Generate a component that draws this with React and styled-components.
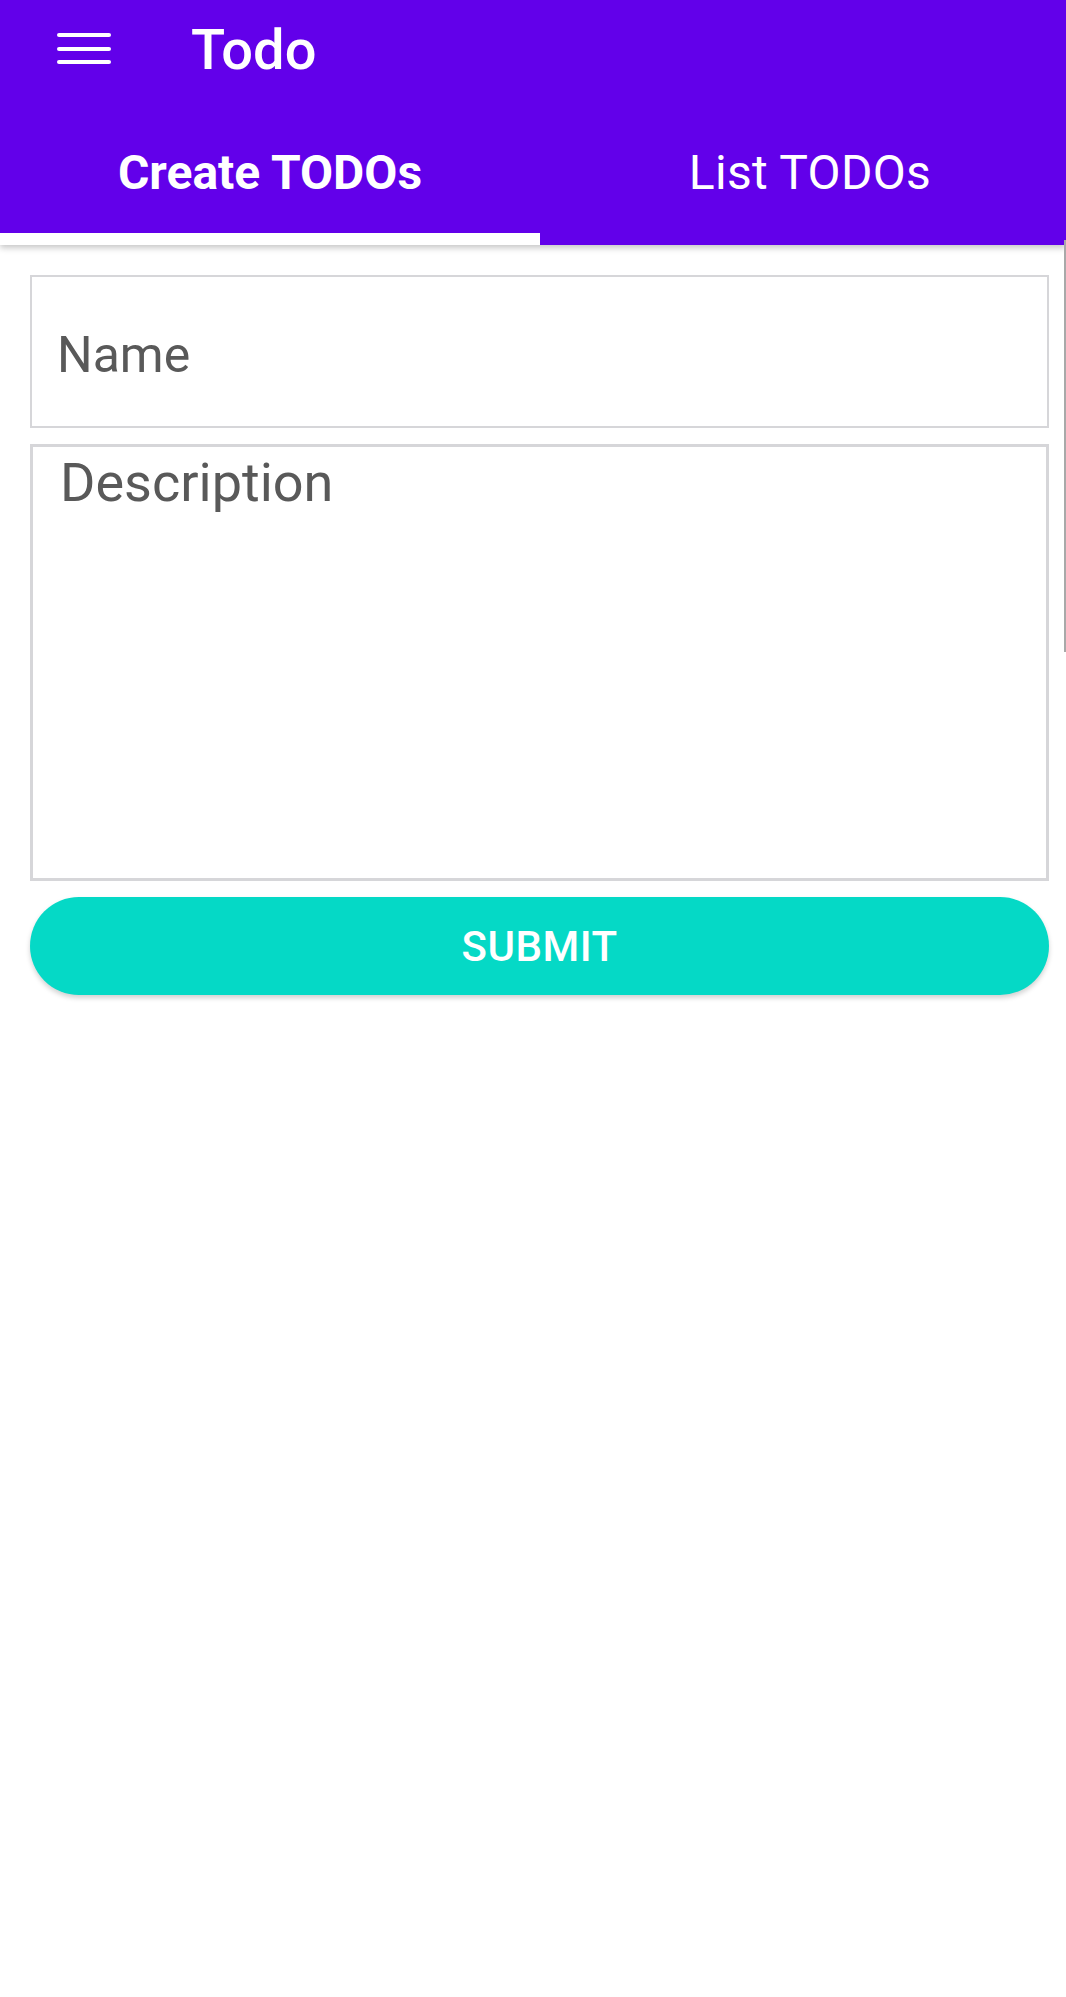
import React from "react";
import styled, { createGlobalStyle } from "styled-components";

const Global = createGlobalStyle`
  html, body { margin: 0; padding: 0; background: #ffffff; }
  body { font-family: Roboto, "Noto Sans", "Liberation Sans", sans-serif; overflow: hidden; }
  * { box-sizing: border-box; }
`;

const Screen = styled.div`
  position: relative;
  width: 1066px;
  min-height: 1997px;
  background: #ffffff;
  overflow: hidden;
`;

const Header = styled.header`
  background: #6200ea;
  box-shadow: 0 3px 6px rgba(0, 0, 0, 0.22);
  position: relative;
  z-index: 1;
`;

const Toolbar = styled.div`
  height: 98px;
  display: flex;
  align-items: center;
  padding-left: 57px;
  gap: 80px;
`;

const MenuButton = styled.div`
  width: 54px;
  display: flex;
  flex-direction: column;
  gap: 9.6px;
  margin-top: -1px;
`;

const MenuLine = styled.span`
  display: block;
  height: 4px;
  border-radius: 2px;
  background: #ffffff;
`;

const Title = styled.h1`
  margin: 0;
  color: #ffffff;
  font-size: 56px;
  font-weight: 500;
  line-height: 1;
  margin-top: 2px;
`;

const Tabs = styled.nav`
  display: grid;
  grid-template-columns: 540px 540px;
  height: 147px;
`;

const Tab = styled.div`
  display: flex;
  justify-content: center;
  align-items: flex-start;
  padding-top: 46px;
  color: #ffffff;
  font-size: 48px;
  font-weight: ${(p) => (p.$active ? 700 : 400)};
  border-bottom: 12px solid ${(p) => (p.$active ? "#ffffff" : "transparent")};
  letter-spacing: ${(p) => (p.$active ? "0px" : "0.3px")};
`;

const Form = styled.form`
  width: 1019px;
  margin-left: 30px;
  padding-top: 30px;
  display: flex;
  flex-direction: column;
  gap: 16px;
`;

const NameInput = styled.div`
  height: 153px;
  border: 2px solid #d6d6d9;
  display: flex;
  align-items: center;
  padding-left: 25px;
  padding-top: 6px;
  color: #595959;
  font-size: 50px;
  font-weight: 400;
`;

const DescArea = styled.div`
  height: 437px;
  border: 3px solid #d6d6d9;
  padding: 4px 0 0 27px;
  color: #595959;
  font-size: 54px;
  font-weight: 400;
  line-height: 1.17;
`;

const SubmitButton = styled.button`
  height: 98px;
  border: none;
  border-radius: 49px;
  background: #05d9c6;
  color: #ffffff;
  font-family: inherit;
  font-size: 42px;
  font-weight: 500;
  letter-spacing: 0.5px;
  padding: 0;
  box-shadow: 0 3px 5px rgba(0, 0, 0, 0.18);
`;

const Scrollbar = styled.div`
  position: absolute;
  right: 0;
  top: 240px;
  width: 2px;
  height: 412px;
  background: #a9a9a9;
  z-index: 2;
`;

export default function App() {
  return (
    <Screen>
      <Global />
      <Header>
        <Toolbar>
          <MenuButton>
            <MenuLine />
            <MenuLine />
            <MenuLine />
          </MenuButton>
          <Title>Todo</Title>
        </Toolbar>
        <Tabs>
          <Tab $active>Create TODOs</Tab>
          <Tab>List TODOs</Tab>
        </Tabs>
      </Header>
      <Form onSubmit={(e) => e.preventDefault()}>
        <NameInput>Name</NameInput>
        <DescArea>Description</DescArea>
        <SubmitButton type="button">SUBMIT</SubmitButton>
      </Form>
      <Scrollbar />
    </Screen>
  );
}
